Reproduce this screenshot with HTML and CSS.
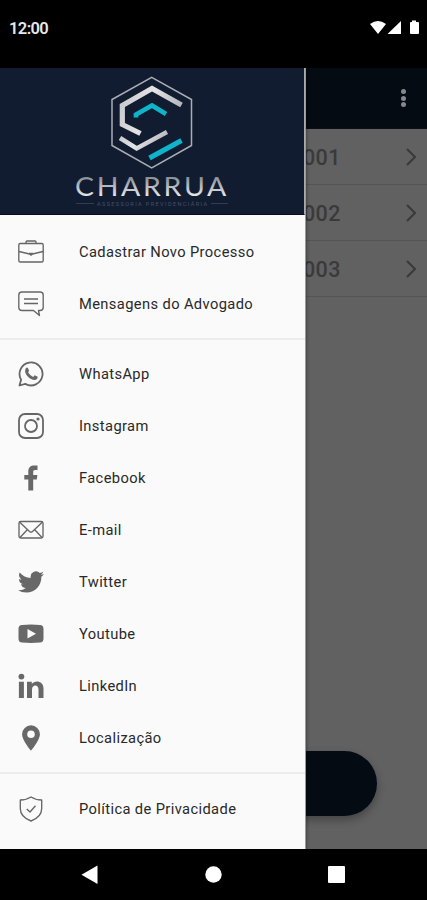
FILE: index.html
```html
<!DOCTYPE html>
<html lang="pt-BR">
<head>
<meta charset="utf-8">
<title>Charrua</title>
<link rel="stylesheet" href="styles.css">
</head>
<body>
<div class="phone">
  <header class="status">
    <span class="clock">12:00</span>
    <svg class="signals" width="50" height="16" viewBox="0 0 50 16"><path d="M0 4Q8-2 16 4L8 14ZM31 1V14H17.500ZM40 2H42V.5H46V2H48Q49 2 49 3V13Q49 14 48 14H41Q40 14 40 13V3Q40 2 41 2Z" fill="#fff"/></svg>
  </header>
  <main class="screen">
    <div class="page">
      <div class="appbar"><i></i><i></i><i></i></div>
      <div class="process"><span>001</span><svg width="12" height="20" viewBox="0 0 12 20"><path d="M2 2L10 10L2 18"/></svg></div>
      <div class="process"><span>002</span><svg width="12" height="20" viewBox="0 0 12 20"><path d="M2 2L10 10L2 18"/></svg></div>
      <div class="process"><span>003</span><svg width="12" height="20" viewBox="0 0 12 20"><path d="M2 2L10 10L2 18"/></svg></div>
      <div class="action"></div>
    </div>
    <aside class="drawer">
      <div class="brand">
        <svg width="303" height="147" viewBox="0 68 303 147">
          <defs>
            <linearGradient id="silver" x1="0" y1="0" x2="1" y2="0.3"><stop offset="0" stop-color="#c5c6ca"/><stop offset=".5" stop-color="#e4e4e6"/><stop offset="1" stop-color="#b4b6bc"/></linearGradient>
            <linearGradient id="word" x1="0" y1="0" x2="0" y2="1"><stop offset=".2" stop-color="#858a95"/><stop offset=".85" stop-color="#eceded"/></linearGradient>
          </defs>
          <g fill="none">
            <path d="M151.700 77.300L191.500 99.500V145.500L151.700 168L112 145.500V99.500Z" stroke="#a9adb5" stroke-width="1.500"/>
            <path d="M181.500 105L152 88.500L122.300 105.500V124.500L140.500 133.500" stroke="url(#silver)" stroke-width="5.200"/>
            <path d="M120 138L136.700 148.500L167 132" stroke="url(#silver)" stroke-width="4.500"/>
            <path d="M136 117.500V114.500L152 105.500L166 114" stroke="#10b4ca" stroke-width="4.700"/>
            <path d="M149.500 158L181.500 140.500" stroke="#10b4ca" stroke-width="5"/>
          </g>
          <text class="wordmark" x="75" y="196" textLength="154" lengthAdjust="spacingAndGlyphs" fill="url(#word)">CHARRUA</text>
          <path d="M76 203.500H94M211 203.500H228" stroke="#3b465a" stroke-width=".8"/>
          <text class="tagline" x="97" y="206" textLength="110" lengthAdjust="spacing">ASSESSORIA PREVIDENCIÁRIA</text>
        </svg>
      </div>
      <nav>
        <section class="group">
          <a class="item"><svg class="icon" viewBox="0 0 26 26"><g class="line"><rect x=".8" y="4.500" width="24.400" height="18.500" rx="1.500"/><path d="M8 4.500V3Q8 2 9 2H17Q18 2 18 3V4.500M1 12.500L11.500 15M25 12.500L14.500 15"/></g><path class="solid" d="M11 13.800H15V15.500L13 17L11 15.500Z"/></svg><span>Cadastrar Novo Processo</span></a>
          <a class="item"><svg class="icon" viewBox="0 0 26 26"><g class="line"><path d="M4 1H22Q25.200 1 25.200 4V16.500Q25.200 19.500 22 19.500H20.500L21.500 24.500L15.500 19.500H4Q.8 19.500 .8 16.500V4Q.8 1 4 1ZM6 8H20M6 12.500H20"/></g></svg><span>Mensagens do Advogado</span></a>
        </section>
        <section class="group social">
          <a class="item"><svg class="icon" viewBox="0 0 26 26"><path class="line wide" d="M1.500 24.500L3.100 18.700A11.500 11.500 0 1 1 7.300 22.900Z"/><path class="solid" d="M8.800 6.600Q9.800 6.500 10.100 7.400L11 9.600Q11.100 10.300 10.200 11.500Q12 14.500 15.200 15.900L16.700 14.300L19.700 15.800Q19.700 18.800 16.500 19C12 18.700 7.500 14 7.100 10.200Q7 7.500 8.800 6.600Z"/></svg><span>WhatsApp</span></a>
          <a class="item"><svg class="icon" viewBox="0 0 26 26"><g class="line wide"><rect x="1" y="1" width="24" height="24" rx="6"/><circle cx="13" cy="13" r="6"/></g><circle class="solid" cx="20" cy="6" r="1.600"/></svg><span>Instagram</span></a>
          <a class="item"><svg class="icon" viewBox="0 0 26 26"><path class="solid" d="M10.300 25.500V14.500H6.300V10H10.300V6.500C10.300 2.300 12.700.5 16.200.5H19.500V5H17.300C15.700 5 15.200 5.700 15.200 7V10H19.400L18.800 14.500H15.200V25.500Z"/></svg><span>Facebook</span></a>
          <a class="item"><svg class="icon" viewBox="0 0 26 26"><g class="line"><rect x="1" y="4.500" width="24" height="16.500" rx="1.800"/><path d="M1.500 5L11.500 14.500Q13 15.800 14.500 14.500L24.500 5M2 20.500L9.500 12.500M24 20.500L16.500 12.500"/></g></svg><span>E-mail</span></a>
          <a class="item"><svg class="icon" viewBox="0 0 24 24"><path class="solid" d="M23.950 4.570a10 10 0 0 1-2.820.77 4.960 4.960 0 0 0 2.160-2.720c-.95.550-2 .95-3.130 1.180a4.920 4.920 0 0 0-8.380 4.480C7.690 8.090 4.070 6.130 1.640 3.160a4.920 4.920 0 0 0 1.520 6.570 4.900 4.900 0 0 1-2.230-.61v.06a4.920 4.920 0 0 0 3.950 4.830 5 5 0 0 1-2.210.08 4.940 4.940 0 0 0 4.600 3.420A9.870 9.870 0 0 1 0 19.540a14 14 0 0 0 7.550 2.210c9.050 0 14-7.500 14-13.980 0-.21 0-.42-.02-.63a9.940 9.940 0 0 0 2.420-2.570Z"/></svg><span>Twitter</span></a>
          <a class="item"><svg class="icon" viewBox="0 0 26 26"><path class="solid" fill-rule="evenodd" d="M4 4Q13 3 22 4Q25.500 4 25.500 8V17.500Q25.500 21.500 22 21.500Q13 22.300 4 21.500Q.5 21.500 .5 17.500V8Q.5 4 4 4ZM9.500 8V17.500L18 12.700Z"/></svg><span>Youtube</span></a>
          <a class="item"><svg class="icon" viewBox="0 0 26 26"><path class="solid" d="M.9 8.800H5.900V25H.9ZM9 8.800H13.800V11C16.300 7 25.500 7 25.500 15.500V25H20.500V16.600C20.500 11 14 11.300 14 16.600V25H9Z"/><circle class="solid" cx="3.400" cy="3.600" r="2.900"/></svg><span>LinkedIn</span></a>
          <a class="item"><svg class="icon" viewBox="0 0 26 26"><path class="solid" fill-rule="evenodd" d="M13 .3A8.900 8.900 0 0 0 4.100 9.200C4.100 15.500 13 25.700 13 25.700S21.900 15.500 21.900 9.200A8.900 8.900 0 0 0 13 .3ZM13 5.400A3.800 3.800 0 1 1 13 13A3.800 3.800 0 1 1 13 5.400Z"/></svg><span>Localização</span></a>
        </section>
        <section class="group policy">
          <a class="item"><svg class="icon" viewBox="0 0 26 26"><path class="line" d="M13 1Q17.500 4 23.700 4V12.500Q23.700 21 13 25Q2.300 21 2.300 12.500V4Q8.500 4 13 1ZM8.800 13L12 16L17.500 9.800"/></svg><span>Política de Privacidade</span></a>
        </section>
      </nav>
    </aside>
  </main>
  <footer class="navbar">
    <svg width="17" height="20" viewBox="0 0 17 20"><path d="M16.500 .5V19L.5 9.800Z" fill="#fff"/></svg>
    <svg width="17" height="17" viewBox="0 0 17 17"><circle cx="8.500" cy="8.500" r="8.200" fill="#fff"/></svg>
    <svg width="17" height="17" viewBox="0 0 17 17"><rect width="17" height="17" rx="1" fill="#fff"/></svg>
  </footer>
</div>
</body>
</html>
```
FILE: styles.css
```css
* { box-sizing: border-box; }
body { margin: 0; background: #000; font-family: Roboto, sans-serif; }
.phone { width: 427px; height: 900px; display: flex; flex-direction: column; overflow: hidden; background: #000; }
.status { height: 68px; flex: none; display: flex; justify-content: space-between; align-items: flex-start; padding: 18px 7px 0 9px; color: #e8e8e8; }
.clock { font-size: 16.5px; line-height: 21px; font-weight: 600; letter-spacing: -.6px; }
.signals { margin-top: 2px; }
.screen { position: relative; height: 781px; flex: none; }
.page { height: 100%; background: #616161; display: flex; flex-direction: column; }
.appbar { height: 61px; background: #050b13; border-bottom: 1px solid #0b0f14; display: flex; flex-direction: column; align-items: flex-end; justify-content: center; gap: 1.6px; padding-right: 21px; flex: none; }
.appbar i { width: 5px; height: 5px; border-radius: 50%; background: #85888c; }
.process { height: 56px; flex: none; display: flex; align-items: center; justify-content: space-between; padding: 1px 10px 0 303px; border-bottom: 1px solid #555; color: #3a3a3a; font-size: 21.5px; font-weight: 500; letter-spacing: .4px; }
.process svg { fill: none; stroke: #393939; stroke-width: 2; }
.action { width: 327px; height: 65px; margin: auto 50px 33px; border-radius: 33px; background: #050b13; box-shadow: 0 4px 9px rgba(0,0,0,.3); flex: none; }
.drawer { position: absolute; left: 0; top: 0; width: 305.5px; height: 100%; background: #fafafa; border-right: 1.5px solid #999; box-shadow: 1px 0 3px rgba(0,0,0,.3); }
.brand { height: 147px; background: #121c31; border-right: 1.5px solid #aaa; border-bottom: 1px solid #080c20; }
.brand svg { display: block; }
.wordmark { font-family: Lato, sans-serif; font-size: 26.5px; letter-spacing: 2.5px; }
.tagline { font-family: Roboto, sans-serif; font-size: 5.5px; fill: #465064; }
.group { padding: 10.5px 0 8px; border-bottom: 2px solid #ececec; }
.social { padding: 8px 0 7.6px; }
.policy { padding: 9px 0; border-bottom: 0; }
.item { height: 52.1px; display: flex; align-items: center; padding-left: 18px; gap: 35px; color: #292929; font-size: 14.7px; letter-spacing: .38px; }
.icon { width: 26px; height: 26px; flex: none; }
.line { fill: none; stroke: #666; stroke-width: 1.35; stroke-linejoin: round; }
.wide { stroke-width: 1.8; }
.solid { fill: #686868; }
.navbar { height: 51px; display: flex; align-items: center; justify-content: space-between; padding: 0 82px 0 81px; }
```
